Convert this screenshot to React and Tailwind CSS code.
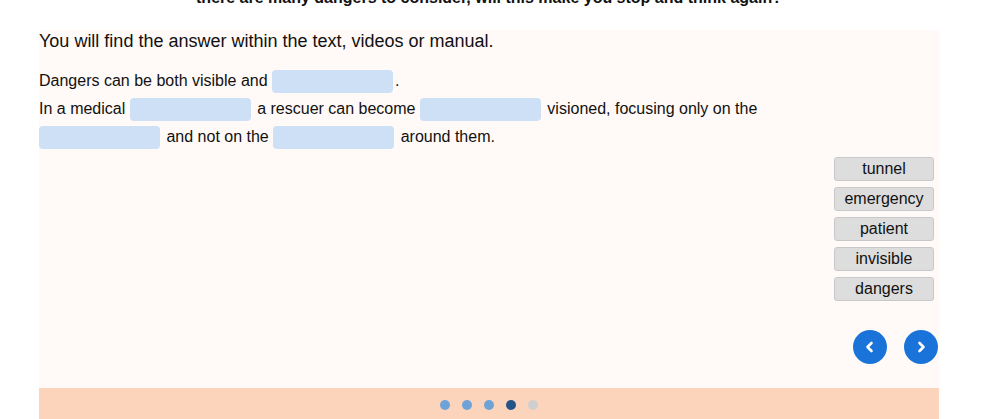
import React from "react";

const words = ["tunnel", "emergency", "patient", "invisible", "dangers"];

function Blank() {
  return <span className="inline-block w-[121px] h-[23px] align-middle rounded-[4px] bg-[#cde0f5] mr-[2px]"></span>;
}

export default function App() {
  return (
    <div className="w-[982px] h-[419px] overflow-hidden bg-white font-['Liberation_Sans',Arial,sans-serif] text-[#111]">
      <div className="ml-[39px] w-[900px]">
        <div className="h-[30px] flex flex-col">
          <div className="-mt-[11px] text-center text-[16px] font-bold leading-[18px]">
            there are many dangers to consider, will this make you stop and think again?
          </div>
        </div>

        <div className="bg-[#fffaf7] flex flex-col">
          <div className="text-[18px] leading-[22px] h-[37px]">
            You will find the answer within the text, videos or manual.
          </div>
          <div className="text-[16px] leading-[28px]">
            <div>Dangers can be both visible and <Blank />.</div>
            <div>
              In a medical <Blank /> a rescuer can become <Blank /> visioned, focusing only on the
            </div>
            <div>
              <Blank /> and not on the <Blank /> around them.
            </div>
          </div>

          <div className="flex flex-col items-end gap-[6px] pr-[5px] mt-[6px]">
            {words.map((w) => (
              <div
                key={w}
                className="w-[100px] h-[24px] flex items-center justify-center rounded-[3px] border border-[#c8c8c8] bg-[#dddddd] text-[16px]"
              >
                {w}
              </div>
            ))}
          </div>

          <div className="flex justify-end gap-[17px] pr-[1px] mt-[29px] mb-[24px]">
            <button className="w-[34px] h-[34px] rounded-full bg-[#1a73d9] flex items-center justify-center">
              <svg width="14" height="14" viewBox="0 0 14 14">
                <path d="M8.5 3 L4.5 7 L8.5 11" fill="none" stroke="white" strokeWidth="2.6" strokeLinecap="round" strokeLinejoin="round" />
              </svg>
            </button>
            <button className="w-[34px] h-[34px] rounded-full bg-[#1a73d9] flex items-center justify-center">
              <svg width="14" height="14" viewBox="0 0 14 14">
                <path d="M5.5 3 L9.5 7 L5.5 11" fill="none" stroke="white" strokeWidth="2.6" strokeLinecap="round" strokeLinejoin="round" />
              </svg>
            </button>
          </div>

          <div className="h-[40px] bg-[#fcd3bb] flex justify-center pt-[12px] gap-[12px]">
            <span className="w-[10px] h-[10px] rounded-full bg-[#6fa3d8]"></span>
            <span className="w-[10px] h-[10px] rounded-full bg-[#6fa3d8]"></span>
            <span className="w-[10px] h-[10px] rounded-full bg-[#6fa3d8]"></span>
            <span className="w-[10px] h-[10px] rounded-full bg-[#245488]"></span>
            <span className="w-[10px] h-[10px] rounded-full bg-[#cfcfcf]"></span>
          </div>
        </div>
      </div>
    </div>
  );
}
